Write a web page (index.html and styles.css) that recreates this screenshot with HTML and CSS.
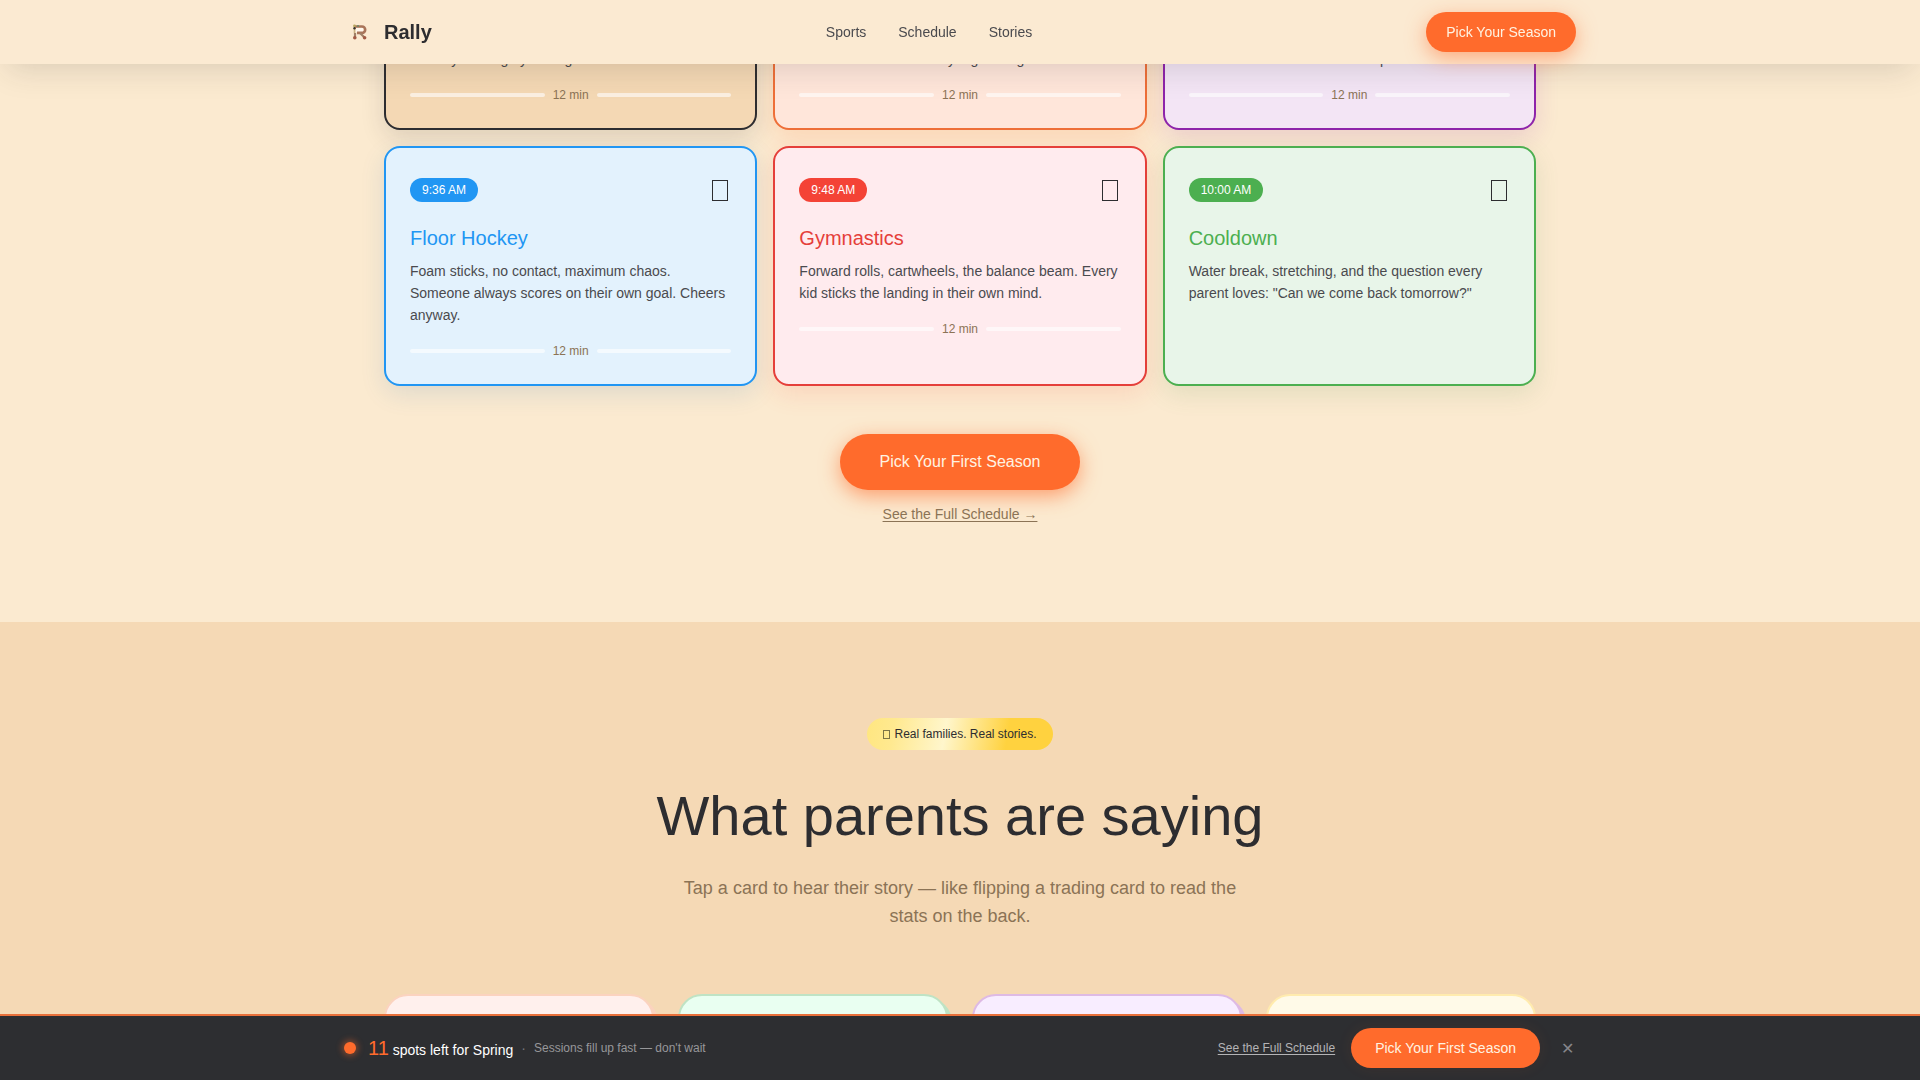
FILE: index.html
```html
<!DOCTYPE html>
<html lang="en">
<head>
<meta charset="utf-8">
<meta name="viewport" content="width=device-width, initial-scale=1">
<title>Rally</title>
<link rel="stylesheet" href="styles.css">
</head>
<body>
<header class="site-header">
  <div class="bar">
    <a class="brand" href="#">
      <span class="brand-mark">
        <svg width="16" height="16" viewBox="0 0 16 16" fill="none" aria-hidden="true">
          <path d="M4 4h7v4H4z" fill="#fff8ee"/>
          <path d="M3 2.500h7a3.200 3.200 0 0 1 0 6.400H5" stroke="#a9745a" stroke-width="2.600"/>
          <path d="M3 9v4.500M8 9l4.500 4.500" stroke="#a08068" stroke-width="2.200"/>
          <path d="M2.500 5v4" stroke="#c9b184" stroke-width="1.600"/>
          <circle cx="2.500" cy="2" r="1.400" fill="#b7a65f"/>
          <circle cx="2.500" cy="4.200" r="1.200" fill="#35302c"/>
          <circle cx="6" cy="2" r="1" fill="#6c8a66"/>
          <circle cx="2.800" cy="13.800" r="1.800" fill="#a35a45"/>
          <circle cx="12.600" cy="13.800" r="1.800" fill="#a35a45"/>
        </svg>
      </span>
      <span>Rally</span>
    </a>
    <nav class="site-nav">
      <a href="#sports">Sports</a>
      <a href="#schedule">Schedule</a>
      <a href="#stories">Stories</a>
    </nav>
    <button class="btn btn-small" type="button">Pick Your Season</button>
  </div>
</header>

<main>
  <section class="schedule" id="schedule">
    <div class="container">
      <div class="sessions">
        <article class="session ink">
          <p>Nobody's losing by trailing.</p>
          <div class="duration">12 min</div>
        </article>
        <article class="session orange">
          <p>Each kick was absolutely a golden goal.</p>
          <div class="duration">12 min</div>
        </article>
        <article class="session purple">
          <p>Small feet and tall nets and a spike.</p>
          <div class="duration">12 min</div>
        </article>
        <article class="session blue">
          <div class="session-top"><span class="time">9:36 AM</span><span class="glyph"></span></div>
          <h3>Floor Hockey</h3>
          <p>Foam sticks, no contact, maximum chaos. Someone always scores on their own goal. Cheers anyway.</p>
          <div class="duration">12 min</div>
        </article>
        <article class="session red">
          <div class="session-top"><span class="time">9:48 AM</span><span class="glyph"></span></div>
          <h3>Gymnastics</h3>
          <p>Forward rolls, cartwheels, the balance beam. Every kid sticks the landing in their own mind.</p>
          <div class="duration">12 min</div>
        </article>
        <article class="session green">
          <div class="session-top"><span class="time">10:00 AM</span><span class="glyph"></span></div>
          <h3>Cooldown</h3>
          <p>Water break, stretching, and the question every parent loves: "Can we come back tomorrow?"</p>
        </article>
      </div>
      <div class="cta">
        <button class="btn btn-large" type="button">Pick Your First Season</button>
        <a class="cta-link" href="#schedule">See the Full Schedule →</a>
      </div>
    </div>
  </section>

  <section class="stories" id="stories">
    <div class="container">
      <div class="stories-head">
        <span class="badge"><span class="glyph glyph-small"></span>Real families. Real stories.</span>
        <h2>What parents are saying</h2>
        <p>Tap a card to hear their story — like flipping a trading card to read the stats on the back.</p>
      </div>
      <div class="story-cards">
        <article class="story rose"></article>
        <article class="story mint"></article>
        <article class="story lilac"></article>
        <article class="story cream"></article>
      </div>
    </div>
  </section>
</main>

<aside class="offer">
  <div class="bar">
    <div class="offer-info">
      <span class="pulse"></span>
      <span class="spots"><strong>11</strong> spots left for Spring</span>
      <span class="sep">·</span>
      <span class="hint">Sessions fill up fast — don't wait</span>
    </div>
    <div class="offer-actions">
      <a href="#schedule">See the Full Schedule</a>
      <button class="btn btn-offer" type="button">Pick Your First Season</button>
      <button class="close" type="button" aria-label="Dismiss">✕</button>
    </div>
  </div>
</aside>
</body>
</html>
```
FILE: styles.css
```css
*, *::before, *::after { box-sizing: border-box; }

body {
  margin: 0;
  background: #fbead0;
  color: #2d2d30;
  font-family: "Liberation Sans", Arial, sans-serif;
  font-size: 14px;
}

h2, h3, p { margin: 0; font-weight: 400; }
a { color: inherit; }
button { border: 0; font: inherit; cursor: pointer; }

.container { max-width: 1200px; margin: 0 auto; padding: 0 24px; }

.bar {
  display: flex;
  align-items: center;
  justify-content: space-between;
  max-width: 1280px;
  height: 64px;
  margin: 0 auto;
  padding: 0 24px;
}

/* Header */
.site-header {
  position: fixed;
  z-index: 10;
  inset: 0 0 auto;
  background: #fbead2;
  box-shadow: 0 12px 32px -8px rgba(45, 45, 48, 0.17);
}
.brand {
  display: flex;
  align-items: center;
  gap: 8px;
  font-size: 20px;
  font-weight: 700;
  text-decoration: none;
}
.brand-mark { display: grid; place-items: center; width: 32px; height: 32px; }
.site-nav { display: flex; gap: 32px; }
.site-nav a { color: #4a4a4e; text-decoration: none; }

/* Buttons */
.btn { background: #ff6b2c; color: #fff3e2; border-radius: 28px; }
.btn-small { height: 40px; padding: 0 20px; box-shadow: 0 6px 20px rgba(255, 107, 44, 0.5); }
.btn-large {
  height: 56px;
  padding: 0 40px;
  font-size: 16px;
  box-shadow: 0 6px 20px rgba(255, 107, 44, 0.6);
}
.btn-offer { height: 40px; padding: 0 24px; border-radius: 20px; box-shadow: 0 0 16px rgba(255, 107, 44, 0.08); }

/* Schedule */
.schedule { padding: 22px 0 96px; }
.sessions { display: grid; grid-template-columns: repeat(3, 1fr); gap: 16px; }
.session {
  padding: 24px;
  background: var(--tint);
  border: 2px solid var(--tone);
  border-radius: 16px;
  box-shadow: 0 8px 24px var(--glow);
}
.ink { --tone: #2d2d30; --tint: #f4d8b4; --glow: rgba(45, 45, 48, 0.14); }
.orange { --tone: #ee6f38; --tint: #ffe6da; --glow: rgba(255, 107, 44, 0.16); }
.purple { --tone: #8e24aa; --tint: #f3e5f5; --glow: rgba(142, 36, 170, 0.14); }
.blue { --tone: #2196f3; --tint: #e3f2fd; --glow: rgba(33, 110, 180, 0.13); }
.red { --tone: #e53f3a; --tint: #ffebee; --glow: rgba(244, 67, 54, 0.13); }
.green { --tone: #4caf50; --tint: #e8f5e9; --glow: rgba(76, 145, 80, 0.14); }

.session-top {
  display: flex;
  align-items: center;
  justify-content: space-between;
  height: 36px;
  margin-bottom: 16px;
}
.time {
  padding: 0 12px;
  background: var(--tone);
  color: #fff;
  border-radius: 12px;
  font-size: 12px;
  line-height: 24px;
}
.red .time { background: #f44336; }
.glyph { width: 16px; height: 21px; margin-right: 3px; border: 1px solid #2d2d30; }
.glyph-small { width: 7px; height: 9px; margin-right: 4px; border-color: #7d7446; }
.session h3 { margin-bottom: 8px; color: var(--tone); font-size: 20px; line-height: 28px; }
.session p { color: #4a4a4e; line-height: 22px; }
.duration {
  display: flex;
  align-items: center;
  gap: 8px;
  margin-top: 16px;
  color: #8b7355;
  font-size: 12px;
  line-height: 18px;
}
.duration::before, .duration::after {
  content: "";
  flex: 1;
  height: 4px;
  background: rgba(255, 255, 255, 0.6);
  border-radius: 2px;
}

.cta { display: flex; flex-direction: column; align-items: center; gap: 12px; margin-top: 48px; }
.cta-link { color: #8b7355; line-height: 24px; text-underline-offset: 2px; }

/* Stories */
.stories { padding: 96px 0 0; background: #f5d9b5; }
.stories-head { display: flex; flex-direction: column; align-items: center; text-align: center; }
.badge {
  display: flex;
  align-items: center;
  padding: 0 16px;
  background: linear-gradient(100deg, #ffe680 0%, #ffe990 15%, #fff6cc 42%, #ffd23f 75%, #ffd23f 100%);
  border-radius: 16px;
  font-size: 12px;
  line-height: 32px;
}
.stories h2 { margin: 32px 0 24px; font-size: 56px; line-height: 68px; }
.stories p { max-width: 576px; color: #8b7355; font-size: 18px; line-height: 28px; }
.story-cards { display: grid; grid-template-columns: repeat(4, 1fr); gap: 24px; margin-top: 64px; }
.story {
  min-height: 80px;
  background: var(--tint);
  border: 2px solid var(--edge);
  border-radius: 24px;
  box-shadow: 4px 4px 0 var(--edge);
}
.rose { --tint: #fff0ed; --edge: #fbd3bf; }
.mint { --tint: #e9fff1; --edge: #bfe3c4; }
.lilac { --tint: #f8edff; --edge: #debae4; }
.cream { --tint: #fffae8; --edge: #ffebae; box-shadow: none; }

/* Offer bar */
.offer { position: fixed; z-index: 10; inset: auto 0 0; background: #2d2e31; border-top: 2px solid #e8703a; }
.offer-info, .offer-actions { display: flex; align-items: center; }
.pulse {
  width: 12px;
  height: 12px;
  margin-right: 12px;
  background: #ff6b2c;
  border-radius: 50%;
  box-shadow: 0 0 6px 2px rgba(255, 107, 44, 0.4);
}
.spots { color: #fff; }
.spots strong { color: #ff6b2c; font-size: 20px; font-weight: 400; }
.sep { margin: 0 8px; color: #77777a; }
.hint { color: #97979a; font-size: 12px; }
.offer-actions { gap: 16px; }
.offer-actions a { color: #b4b4b6; font-size: 12px; text-underline-offset: 2px; }
.close { padding: 0 2px 0 5px; background: none; color: #86868a; font-size: 16px; }
```
